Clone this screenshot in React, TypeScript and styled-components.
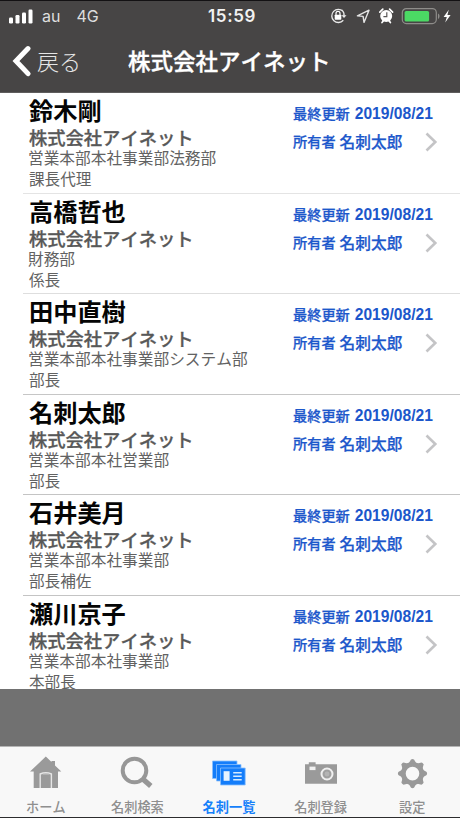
import React from "react";
import styled, { createGlobalStyle } from "styled-components";

const GlobalStyle = createGlobalStyle`
  * { box-sizing: border-box; }
  body {
    margin: 0;
    background: #717171;
    font-family: "Noto Sans CJK JP", sans-serif;
    font-kerning: none;
  }
`;

const Screen = styled.div`
  display: flex;
  flex-direction: column;
  width: 460px;
  height: 818px;
  overflow: hidden;
  background: #717171;
  border-top: 1px solid #131113;
  border-bottom: 1px solid #2c2c2e;
  white-space: nowrap;
`;

const StatusBar = styled.div`
  display: grid;
  grid-template-columns: 1fr auto 1fr;
  align-items: center;
  flex: none;
  height: 30px;
  padding: 0 5px 0 9px;
  background: #474545;
  color: #f2f2f2;
  font-family: Inter, sans-serif;
`;

const Carrier = styled.div`
  display: flex;
  align-items: center;
  font-size: 16px;
  color: #dedede;
  svg { margin-right: 9px; }
`;

const Network = styled.span`
  margin-left: 16px;
`;

const Clock = styled.div`
  font-size: 17px;
  font-weight: 600;
  letter-spacing: 0.6px;
`;

const Indicators = styled.div`
  display: flex;
  align-items: center;
  justify-content: flex-end;
`;

const NavBar = styled.header`
  display: flex;
  align-items: center;
  flex: none;
  height: 62px;
  padding: 0 0 2px 12px;
  background: #474545;
  border-bottom: 1px solid #5f5d5d;
  color: #fff;
`;

const Back = styled.button`
  display: flex;
  align-items: center;
  width: 116px;
  padding: 0;
  border: 0;
  background: none;
  color: #e6e6e6;
  font: 300 22px/30px "Noto Sans CJK JP", sans-serif;
  svg { margin-right: 5px; }
`;

const BackLabel = styled.span`
  padding-bottom: 2px;
`;

const Title = styled.h1`
  margin: 0;
  padding-bottom: 1px;
  font-size: 22.5px;
  line-height: 30px;
  font-weight: 500;
  -webkit-text-stroke: 0.35px #fff;
`;

const List = styled.ul`
  flex: none;
  height: 596px;
  margin: 0;
  padding: 0;
  overflow: hidden;
  list-style: none;
  background: #fff;
`;

const Row = styled.li<{ $line: string }>`
  display: flex;
  justify-content: space-between;
  height: 100.6px;
  margin-left: 23px;
  padding: 1px 22px 0 5px;
  border-bottom: 1px solid ${(p) => p.$line};
`;

const Person = styled.div`
  display: flex;
  flex-direction: column;
  color: #626262;
`;

const Name = styled.div`
  padding-left: 1px;
  font-size: 24.2px;
  line-height: 32px;
  font-weight: 700;
  color: #050505;
`;

const Company = styled.div`
  padding-left: 1px;
  font-size: 18.3px;
  line-height: 22px;
  font-weight: 500;
  color: #585858;
  -webkit-text-stroke: 0.3px #585858;
`;

const Department = styled.div`
  font-size: 15.7px;
  line-height: 20px;
`;

const Position = styled.div`
  padding-left: 1px;
  font-size: 15.6px;
  line-height: 21px;
`;

const Meta = styled.div`
  display: flex;
  flex-direction: column;
  width: 145px;
  padding-top: 6px;
  color: #1c57cb;
  font-weight: 500;
`;

const MetaLine = styled.div`
  display: flex;
  align-items: center;
  height: 28px;
`;

const Label = styled.span`
  padding-bottom: 2px;
  font-size: 14.2px;
  line-height: 20px;
  -webkit-text-stroke: 0.25px #1c57cb;
`;

const DateText = styled.span`
  margin-left: 5px;
  font-family: "Liberation Sans", sans-serif;
  font-size: 15.6px;
  font-weight: 700;
  line-height: 20px;
`;

const Owner = styled.span`
  flex: 1;
  margin-left: 4px;
  font-size: 15.7px;
  line-height: 20px;
  -webkit-text-stroke: 0.25px #1c57cb;
`;

const TabBar = styled.nav`
  display: grid;
  grid-template-columns: repeat(5, 1fr);
  flex: none;
  height: 71px;
  margin-top: auto;
  padding-right: 2px;
  border-top: 1px solid #b5b5b5;
  background: #f8f8f8;
`;

const Tab = styled.div<{ $active?: boolean }>`
  display: flex;
  flex-direction: column;
  align-items: center;
  padding-top: 8px;
  color: ${(p) => (p.$active ? "#1680fa" : "#8f8f8f")};
  font-size: 13.2px;
  line-height: 18px;
  font-weight: ${(p) => (p.$active ? 700 : 500)};
  svg { margin-bottom: 7px; }
`;

const Signal = () => (
  <svg width="24" height="15" viewBox="0 0 24 15" fill="#fff">
    <rect x="0" y="8.5" width="4" height="6" rx="1.2" />
    <rect x="6.5" y="6" width="4" height="8.5" rx="1.2" />
    <rect x="13" y="3.5" width="4" height="11" rx="1.2" />
    <rect x="19.5" y="0.5" width="4" height="14" rx="1.2" />
  </svg>
);

const StatusIcons = () => (
  <svg width="126" height="20" viewBox="0 0 126 20" fill="none">
    <path d="M14 5.2A6.6 6.6 0 1 0 14.3 14.3M12.8 4A6.6 6.6 0 0 1 15 10" stroke="#e9e9e9" strokeWidth="1.3" />
    <path d="M12.5 9.2h5L15 12z" fill="#e9e9e9" />
    <rect x="5.7" y="8.7" width="6.6" height="5" rx=".6" fill="#fff" />
    <path d="M7 9V7.4a2 2 0 0 1 4 0V9" stroke="#fff" strokeWidth="1.2" />
    <path d="M28.4 9.9 40 4.2l-5 12.2-.9-6z" stroke="#e4e4e4" strokeWidth="1.4" strokeLinejoin="round" />
    <circle cx="57.2" cy="10" r="6" fill="#fff" />
    <path d="m50.8 6.2 3-3M63.6 6.2l-3-3M53 16.5l1.3-1.6M61.4 16.5l-1.3-1.6" stroke="#fff" strokeWidth="1.7" strokeLinecap="round" />
    <path d="M57.8 6.2v4.4h-3.4" stroke="#5b5959" strokeWidth="1.2" />
    <rect x="73.3" y="2.6" width="34" height="15" rx="4" stroke="#8e8d8a" strokeWidth="1.2" />
    <rect x="75.6" y="5" width="24.5" height="10.5" rx="1.6" fill="#4bd964" />
    <path d="M109 7.5c2 .8 2 4.7 0 5.4z" fill="#8e8d8a" />
    <path d="m119.8 3.8-5.2 7.1h3.2l-1.6 5.6 5.4-7.5h-3.2z" fill="#fff" />
  </svg>
);

const BackIcon = () => (
  <svg width="20" height="32" viewBox="0 0 20 32" fill="none">
    <path d="M16 3.6 4 16l12 12.6" stroke="#fff" strokeWidth="5" strokeLinecap="round" strokeLinejoin="miter" />
  </svg>
);

const Chevron = () => (
  <svg width="13" height="20" viewBox="0 0 13 20" fill="none">
    <path d="m1.5 1.5 8.8 8.5-8.8 8.5" stroke="#c4c4c6" strokeWidth="2.6" />
  </svg>
);

const HomeIcon = () => (
  <svg width="34" height="36" viewBox="0 0 34 36">
    <path d="M16.8 1.6 22.5 7V5.9H26v4.6l6.3 6.1H29v16.5H4.7V16.6H1z" fill="#9a9a9a" />
    <path d="M11.2 33V19q5.6-2.5 11.2 0v14" fill="#9a9a9a" stroke="#e6e6e6" strokeWidth="1.4" />
    <path d="M13.6 19h6.6" stroke="#c6c6c6" />
  </svg>
);

const SearchIcon = () => (
  <svg width="34" height="36" viewBox="0 0 34 36" fill="none" stroke="#979797">
    <circle cx="14.5" cy="15.5" r="11.8" strokeWidth="4" />
    <path d="m22.8 24 8 7" strokeWidth="5.2" />
  </svg>
);

const CardsIcon = () => (
  <svg width="34" height="36" viewBox="0 0 34 36" fill="none">
    <g fill="#147dfa" stroke="#8bc0fc" strokeWidth=".8">
      <path d="M.5 6H25v17.5H.5z" />
      <path d="M4.5 9.5H29V26H4.5z" />
      <path d="M8.5 13H33.2v17H8.5z" />
    </g>
    <path d="M11.6 16.2h6v9.6h-6z" fill="#e7f3ff" />
    <path d="M21.2 17.7h8.5M21.2 21.2h8.5M21.2 24.8h8.5" stroke="#d8ebff" strokeWidth="1.6" />
  </svg>
);

const CameraIcon = () => (
  <svg width="34" height="36" viewBox="0 0 34 36">
    <path d="M1 9.2h3.8V7.3h6.8v1.9H33v19.6H1z" fill="#9a9a9a" />
    <rect x="5.5" y="11.6" width="6" height="3.5" fill="#f1f1f1" />
    <circle cx="23" cy="19" r="5.5" fill="#a0a0a0" stroke="#f0f0f0" strokeWidth="2" />
    <circle cx="23" cy="19" r="2.4" fill="#b4b4b4" />
  </svg>
);

const teeth = [0, 45, 90, 135, 180, 225, 270, 315];

const GearIcon = () => (
  <svg width="34" height="36" viewBox="0 0 34 36">
    <circle cx="17.5" cy="18.6" r="9.2" fill="none" stroke="#999" strokeWidth="4.8" />
    {teeth.map((angle) => (
      <path key={angle} transform={`rotate(${angle} 17.5 18.6)`} d="M13.5 8.7 16 4.4q1.5-.8 3 0l2.5 4.3z" fill="#999" />
    ))}
  </svg>
);

const people = [
  { name: "鈴木剛", department: "営業本部本社事業部法務部", position: "課長代理", line: "#e4e4e4" },
  { name: "高橋哲也", department: "財務部", position: "係長", line: "#dedede" },
  { name: "田中直樹", department: "営業本部本社事業部システム部", position: "部長", line: "#c6c6c6" },
  { name: "名刺太郎", department: "営業本部本社営業部", position: "部長", line: "#c4c4c4" },
  { name: "石井美月", department: "営業本部本社事業部", position: "部長補佐", line: "#c4c4c4" },
  { name: "瀬川京子", department: "営業本部本社事業部", position: "本部長", line: "#c4c4c4" },
];

const tabs = [
  { label: "ホーム", Icon: HomeIcon },
  { label: "名刺検索", Icon: SearchIcon },
  { label: "名刺一覧", Icon: CardsIcon, active: true },
  { label: "名刺登録", Icon: CameraIcon },
  { label: "設定", Icon: GearIcon },
];

export default function App() {
  return (
    <>
      <GlobalStyle />
      <Screen>
        <StatusBar>
          <Carrier>
            <Signal />
            <span>au</span>
            <Network>4G</Network>
          </Carrier>
          <Clock>15:59</Clock>
          <Indicators>
            <StatusIcons />
          </Indicators>
        </StatusBar>
        <NavBar>
          <Back>
            <BackIcon />
            <BackLabel>戻る</BackLabel>
          </Back>
          <Title>株式会社アイネット</Title>
        </NavBar>
        <List>
          {people.map((p) => (
            <Row key={p.name} $line={p.line}>
              <Person>
                <Name>{p.name}</Name>
                <Company>株式会社アイネット</Company>
                <Department>{p.department}</Department>
                <Position>{p.position}</Position>
              </Person>
              <Meta>
                <MetaLine>
                  <Label>最終更新</Label>
                  <DateText>2019/08/21</DateText>
                </MetaLine>
                <MetaLine>
                  <Label>所有者</Label>
                  <Owner>名刺太郎</Owner>
                  <Chevron />
                </MetaLine>
              </Meta>
            </Row>
          ))}
        </List>
        <TabBar>
          {tabs.map(({ label, Icon, active }) => (
            <Tab key={label} $active={active}>
              <Icon />
              {label}
            </Tab>
          ))}
        </TabBar>
      </Screen>
    </>
  );
}
